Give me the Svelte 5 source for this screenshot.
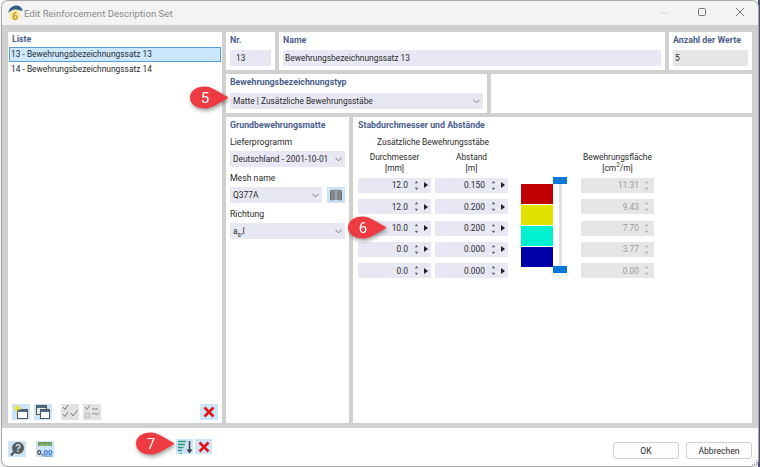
<script>
    let rows = [
        {dia: "12.0", gap: "0.150", area: "11.31"},
        {dia: "12.0", gap: "0.200", area: "9.43"},
        {dia: "10.0", gap: "0.200", area: "7.70"},
        {dia: "0.0", gap: "0.000", area: "3.77"},
        {dia: "0.0", gap: "0.000", area: "0.00"}
    ];

    let legend = ["#c00000", "#e2e200", "#00f0d0", "#0000a8"];

    // rounded bubble with a point on its right side
    let bubble = "M16 1.500 C22 1.500 28 6 38.500 11.800 C39.200 12.300 39.200 12.900 38.500 13.400 C28 19 22 23.500 16 23.500 C7 23.500 1 19 1 12.500 C1 6 7 1.500 16 1.500 Z";
</script>

<div class="window">
    <header class="titlebar">
        <svg class="app-icon" width="16" height="16" viewBox="0 0 16 16">
            <path d="M1.500 8 C1.500 3 6 0.500 9.500 0.500 C13 0.500 15.500 3 15.500 6 L9 4.500 C6 4.500 3 6 1.500 8Z" fill="#2f5f86"/>
            <circle cx="8" cy="10" r="5.500" fill="#f7e7a8"/>
            <text x="8" y="14.500" class="six">6</text>
        </svg>
        <span class="title">Edit Reinforcement Description Set</span>
        <div class="win-btns">
            <svg width="12" height="12" viewBox="0 0 12 12"><path d="M1 6H10" stroke="#dcdcdc" fill="none"/></svg>
            <svg width="12" height="12" viewBox="0 0 12 12"><rect x="1.500" y="1.500" width="7" height="7" rx="1" stroke="#777" fill="none"/></svg>
            <svg width="12" height="12" viewBox="0 0 12 12"><path d="M1 1L9 9M9 1L1 9" stroke="#777" fill="none"/></svg>
        </div>
    </header>

    <main class="content">
        <section class="panel list-panel">
            <h3>Liste</h3>
            <ul>
                <li class="selected">13 - Bewehrungsbezeichnungssatz 13</li>
                <li>14 - Bewehrungsbezeichnungssatz 14</li>
            </ul>
            <div class="list-tools">
                <button class="tool">
                    <svg width="16" height="16" viewBox="0 0 16 16">
                        <rect x="4.500" y="5.500" width="10" height="9" fill="#fff" stroke="#555"/>
                        <rect x="5" y="6" width="9" height="2" fill="#4d6b8a"/>
                        <path d="M4 0.500L5 3L7.500 2L6 4.200L8 6L5 5.500L4 8L3 5.500L0.500 6L2 4L0.500 2L3 3Z" fill="#e8e020"/>
                    </svg>
                </button>
                <button class="tool">
                    <svg width="16" height="16" viewBox="0 0 16 16">
                        <rect x="1.500" y="1.500" width="10" height="9" fill="#dfe6ee" stroke="#555"/>
                        <rect x="2" y="2" width="9" height="2" fill="#4d6b8a"/>
                        <rect x="5.500" y="5.500" width="9" height="9" fill="#fff" stroke="#555"/>
                        <rect x="6" y="6" width="8" height="2" fill="#4d6b8a"/>
                    </svg>
                </button>
                <button class="tool off first-off">
                    <svg width="16" height="16" viewBox="0 0 16 16" fill="none" stroke="#777">
                        <path d="M1 3L3 5.500L6 1M1 10L3 12.500L6 8M9 9L11 12L15.500 6"/>
                    </svg>
                </button>
                <button class="tool off">
                    <svg width="16" height="16" viewBox="0 0 16 16" fill="none" stroke="#888">
                        <path d="M1 3L3 5.500L6 1"/>
                        <rect x="1.500" y="9.500" width="4" height="4" stroke="#bbb"/>
                        <path d="M8 5H14M8 10C10 8 12 12 15 9"/>
                    </svg>
                </button>
                <button class="tool delete">
                    <svg width="12" height="12" viewBox="0 0 12 12"><path d="M1.500 1.500L10.500 10.500M10.500 1.500L1.500 10.500" stroke="#e0131a" stroke-width="2.600"/></svg>
                </button>
            </div>
        </section>

        <div class="right">
            <div class="top-row">
                <section class="panel nr">
                    <h3>Nr.</h3>
                    <div class="field">13</div>
                </section>
                <section class="panel name">
                    <h3>Name</h3>
                    <div class="field">Bewehrungsbezeichnungssatz 13</div>
                </section>
                <section class="panel count">
                    <h3>Anzahl der Werte</h3>
                    <div class="field grey">5</div>
                </section>
            </div>

            <div class="type-row">
                <section class="panel type">
                    <h3>Bewehrungsbezeichnungstyp</h3>
                    <div class="field select type-select">Matte | Zusätzliche Bewehrungsstäbe
                        <svg class="chev" width="7" height="5" viewBox="0 0 8 5"><path d="M0.500 0.500L4 4L7.500 0.500" stroke="#666" fill="none"/></svg>
                    </div>
                </section>
                <section class="panel empty"></section>
            </div>

            <div class="main-row">
                <section class="panel mesh">
                    <h3>Grundbewehrungsmatte</h3>
                    <label>Lieferprogramm</label>
                    <div class="field select">Deutschland - 2001-10-01
                        <svg class="chev" width="7" height="5" viewBox="0 0 8 5"><path d="M0.500 0.500L4 4L7.500 0.500" stroke="#666" fill="none"/></svg>
                    </div>
                    <label>Mesh name</label>
                    <div class="mesh-line">
                        <div class="field select">Q377A
                            <svg class="chev" width="7" height="5" viewBox="0 0 8 5"><path d="M0.500 0.500L4 4L7.500 0.500" stroke="#666" fill="none"/></svg>
                        </div>
                        <button class="book">
                            <svg width="14" height="12" viewBox="0 0 14 12">
                                <path d="M1 1.500L6.500 0.500V11L1 11.500Z M7.500 0.500L13 1.500V11.500L7.500 11Z" fill="#6d6d6d"/>
                                <path d="M3 1.500V11M5 1V11M9 1V11M11 1.500V11" stroke="#c8d4dc" stroke-width="0.500"/>
                            </svg>
                        </button>
                    </div>
                    <label>Richtung</label>
                    <div class="field select">a<sub>s</sub>,I
                        <svg class="chev" width="7" height="5" viewBox="0 0 8 5"><path d="M0.500 0.500L4 4L7.500 0.500" stroke="#666" fill="none"/></svg>
                    </div>
                </section>

                <section class="panel bars">
                    <h3>Stabdurchmesser und Abstände</h3>
                    <div class="bars-grid">
                        <div class="group-head">Zusätzliche Bewehrungsstäbe</div>
                        <div class="head h-dia">Durchmesser<br>[mm]</div>
                        <div class="head h-gap">Abstand<br>[m]</div>
                        <div class="head h-area">Bewehrungsfläche<br>[cm<sup>2</sup>/m]</div>

                        <div class="legend">
                            <div class="swatches">
                                {#each legend as color}
                                    <div class="swatch" style="background: {color}"></div>
                                {/each}
                            </div>
                            <div class="slider">
                                <div class="handle"></div>
                                <div class="track"></div>
                                <div class="handle"></div>
                            </div>
                        </div>

                        {#each rows as row, i}
                            <div class="spin" style="grid-area: {i + 3} / 1">
                                <span class="val">{row.dia}</span>
                                <svg class="arrows" width="5" height="11" viewBox="0 0 5 11"><path d="M2.500 1L4.200 3.200H0.800ZM2.500 10L0.800 7.800H4.200Z" fill="#555"/></svg>
                                <svg class="play" width="4" height="6" viewBox="0 0 4 6"><path d="M0 0L4 3L0 6Z" fill="#222"/></svg>
                            </div>
                            <div class="spin" style="grid-area: {i + 3} / 2">
                                <span class="val">{row.gap}</span>
                                <svg class="arrows" width="5" height="11" viewBox="0 0 5 11"><path d="M2.500 1L4.200 3.200H0.800ZM2.500 10L0.800 7.800H4.200Z" fill="#555"/></svg>
                                <svg class="play" width="4" height="6" viewBox="0 0 4 6"><path d="M0 0L4 3L0 6Z" fill="#222"/></svg>
                            </div>
                            <div class="spin grey" style="grid-area: {i + 3} / 4">
                                <span class="val">{row.area}</span>
                                <svg class="arrows area-arrows" width="5" height="11" viewBox="0 0 5 11"><path d="M2.500 1L4.200 3.200H0.800ZM2.500 10L0.800 7.800H4.200Z" fill="#aaa"/></svg>
                            </div>
                        {/each}
                    </div>
                </section>
            </div>
        </div>
    </main>

    <footer class="footer">
        <div class="foot-left">
            <button class="tool">
                <svg width="16" height="16" viewBox="0 0 16 16">
                    <circle cx="9" cy="7" r="6" fill="#5a5a5a"/>
                    <path d="M5 11L2 14.500" stroke="#5a5a5a" stroke-width="2.500"/>
                    <text x="9" y="10.500" class="q">?</text>
                </svg>
            </button>
            <button class="tool units">
                <svg width="16" height="16" viewBox="0 0 16 16">
                    <rect x="1" y="1" width="14" height="4" fill="#6f9e5a"/>
                    <path d="M3 3V5M5.500 3V5M8 3V5M10.500 3V5M13 3V5" stroke="#cfe4c4" stroke-width="0.600"/>
                    <text x="0" y="13.500" class="nums">0,</text>
                    <text x="6.500" y="13.500" class="nums blue">00</text>
                    <path d="M6.500 15H15.500" stroke="#2a6fd0" stroke-width="0.800"/>
                </svg>
            </button>
        </div>
        <div class="foot-mid">
            <button class="tool">
                <svg width="16" height="16" viewBox="0 0 16 16">
                    <path d="M1 2.500H9M1 5.500H8M1 8.500H6.500M1 11.500H5M3 14.500H4.500" stroke="#2c9a72" stroke-width="1.600"/>
                    <path d="M12.500 2V13" stroke="#444" stroke-width="1.500"/>
                    <path d="M9.500 10.500L12.500 14.500L15.500 10.500Z" fill="#444"/>
                </svg>
            </button>
            <button class="tool delete">
                <svg width="12" height="12" viewBox="0 0 12 12"><path d="M1.500 1.500L10.500 10.500M10.500 1.500L1.500 10.500" stroke="#e0131a" stroke-width="2.600"/></svg>
            </button>
        </div>
        <div class="foot-btns">
            <button class="btn">OK</button>
            <button class="btn">Abbrechen</button>
        </div>
        <svg class="grip" width="7" height="7" viewBox="0 0 7 7"><path d="M5 1h1v1H5zM3 3h1v1H3zM5 3h1v1H5zM1 5h1v1H1zM3 5h1v1H3zM5 5h1v1H5z" fill="#9a9a9a"/></svg>
    </footer>

    <svg class="callout c5" width="40" height="25" viewBox="0 0 40 25"><path d={bubble} fill="#ee3b42"/><text x="16" y="18">5</text></svg>
    <svg class="callout c6" width="40" height="25" viewBox="0 0 40 25"><path d={bubble} fill="#ee3b42"/><text x="16" y="18">6</text></svg>
    <svg class="callout c7" width="40" height="25" viewBox="0 0 40 25"><path d={bubble} fill="#ee3b42"/><text x="16" y="18">7</text></svg>
</div>

<style>
    :global(body) {
        background: linear-gradient(to right, #f4f4f4 758px, #4d4d7a 758px);
        font-family: Roboto, "Noto Sans", sans-serif;
        font-size: 8.400px;
        color: #2a2a2a;
        height: 467px;
    }

    .window {
        position: relative;
        box-sizing: border-box;
        margin: 1px 2px 0 2px;
        width: 756px;
        height: 465px;
        background-color: #fff;
        border-radius: 6px;
        display: flex;
        flex-direction: column;
        overflow: hidden;
        box-shadow: 0 0 0 1px #a8a8a8;
    }

    .titlebar {
        height: 24px;
        background-color: #f3f3f3;
        display: flex;
        align-items: center;
        padding-left: 5px;
        flex: none;
    }

    .app-icon {margin-right: 1px;}
    .six {font-size: 10px; font-weight: 700; fill: #c8a020; text-anchor: middle;}

    .title {
        font-size: 9.600px;
        color: #8a8a8a;
    }

    .win-btns {
        margin-left: auto;
        display: flex;
        gap: 26px;
        padding-right: 11px;
    }

    .content {
        flex: none;
        height: 403px;
        box-sizing: border-box;
        background-color: #d0d0d0;
        padding: 7px 6px 5px 6px;
        display: flex;
        gap: 4px;
    }

    .panel {
        background-color: #fff;
        box-sizing: border-box;
        padding: 0 4px;
    }

    h3 {
        margin: 0;
        font-size: 8.800px;
        font-weight: 700;
        line-height: 14px;
        color: #4a5f8c;
    }

    .list-panel {
        width: 214px;
        display: flex;
        flex-direction: column;
    }

    .list-panel ul {
        list-style: none;
        margin: 1px -3px 0 -3px;
        padding: 0;
        flex: 1;
    }

    .list-panel li {
        height: 15px;
        line-height: 13px;
        padding: 0 1px;
        box-sizing: border-box;
        border: 1px solid transparent;
    }

    .list-panel .selected {
        background-color: #cce8ff;
        border-color: #5a9bd4;
    }

    .list-tools {
        display: flex;
        gap: 4px;
        padding: 0 0 3px 0;
    }

    .tool {
        width: 18px;
        height: 16px;
        padding: 0;
        border: none;
        background-color: #cce4f7;
        display: flex;
        align-items: center;
        justify-content: center;
    }

    .tool.off {background-color: #e2e2e2;}
    .first-off {margin-left: 5px;}
    .tool.delete {margin-left: auto;}

    .right {
        width: 526px;
        display: flex;
        flex-direction: column;
        gap: 4px;
    }

    .top-row {
        height: 38px;
        display: flex;
        gap: 4px;
    }

    .top-row .panel {padding-top: 1px;}
    .nr {width: 49px;}
    .name {width: 386px;}
    .count {width: 83px;}

    .field {
        height: 16px;
        line-height: 16px;
        padding: 0 2px;
        margin-top: 3px;
        background-color: #e8e8f4;
        position: relative;
        box-sizing: border-box;
    }

    .nr .field {padding-left: 6px;}
    .field.grey {background-color: #e6e6e6;}

    .type-row {
        height: 39px;
        display: flex;
        gap: 4px;
    }

    .type {width: 261px; padding-top: 1px;}
    .empty {width: 261px;}
    .type-select {margin-top: 4px; padding-left: 3px;}

    .select {padding-left: 3px;}

    .chev {
        position: absolute;
        right: 3px;
        top: 6px;
    }

    .main-row {
        flex: 1;
        display: flex;
        gap: 4px;
    }

    .mesh {width: 123px; padding-top: 1px;}

    label {
        display: block;
        font-size: 8.700px;
        line-height: 13px;
        margin-top: 5px;
    }

    .mesh h3 + label {margin-top: 4px;}
    .mesh label + .field {margin-top: 2px;}
    .mesh label + .mesh-line {margin-top: 2px;}

    .mesh-line {
        display: flex;
        gap: 5px;
    }

    .mesh-line .field {
        margin-top: 0;
        flex: 1;
    }

    .book {
        width: 18px;
        height: 16px;
        padding: 0;
        border: none;
        background-color: #cce4f7;
        display: flex;
        align-items: center;
        justify-content: center;
    }

    sub {font-size: 6.500px; line-height: 0;}

    .bars {width: 399px; padding: 1px 5px 0 5px;}

    .bars-grid {
        display: grid;
        grid-template-columns: 73px 73px 65px 73px;
        column-gap: 4px;
        grid-template-rows: 14px 16.400px repeat(5, 15px);
        row-gap: 6.300px;
        margin-top: 3px;
    }

    .group-head {
        grid-area: 1 / 1 / 2 / 3;
        text-align: center;
        line-height: 14px;
    }

    .head {
        text-align: center;
        line-height: 11px;
        margin-top: -3px;
    }

    .h-dia {grid-area: 2 / 1;}
    .h-gap {grid-area: 2 / 2;}
    .h-area {grid-area: 2 / 4;}

    sup {font-size: 6.500px; line-height: 0;}

    .spin {
        background-color: #e8e8f4;
        display: flex;
        align-items: center;
        height: 15px;
        padding-right: 3px;
    }

    .spin .val {
        flex: 1;
        text-align: right;
    }

    .arrows {margin: 0 5px 0 6px;}
    .spin.grey {background-color: #e6e6e6; color: #999;}
    .area-arrows {margin: 0 2px 0 5px;}

    .legend {
        grid-area: 3 / 3 / 8 / 4;
        display: flex;
        margin-left: 9px;
    }

    .swatches {
        display: flex;
        flex-direction: column;
        gap: 1px;
        padding-top: 6px;
    }

    .swatch {
        width: 32px;
        height: 20px;
    }

    .slider {
        width: 14px;
        display: flex;
        flex-direction: column;
        align-items: center;
        margin-top: -1px;
    }

    .handle {
        width: 14px;
        height: 7px;
        background-color: #0a78d8;
        flex: none;
    }

    .track {
        width: 3px;
        height: 82px;
        background-color: #e2e2e2;
    }

    .footer {
        flex: 1;
        display: flex;
        align-items: flex-start;
        position: relative;
    }

    .foot-left {
        display: flex;
        gap: 10px;
        padding: 13px 0 0 6px;
    }

    .foot-mid {
        display: flex;
        gap: 2px;
        padding: 11px 0 0 122px;
    }

    .foot-mid .tool {width: 17px; height: 15px;}
    .foot-mid .delete {margin-left: 0;}

    .foot-btns {
        margin-left: auto;
        display: flex;
        gap: 7px;
        padding: 14px 6px 0 0;
    }

    .btn {
        width: 66px;
        height: 17px;
        padding: 0;
        font-family: inherit;
        font-size: 8.600px;
        color: #2a2a2a;
        background-color: #fdfdfd;
        border: 1px solid #d0d0d0;
        border-radius: 3px;
    }

    .grip {
        position: absolute;
        right: 0;
        bottom: 0;
    }

    .q {font-size: 10px; font-weight: 700; fill: #cce4f7; text-anchor: middle;}
    .nums {font-size: 8px; font-weight: 700; fill: #333;}
    .nums.blue {fill: #2a6fd0;}

    .callout {
        position: absolute;
        overflow: visible;
        filter: drop-shadow(1px 2px 2px rgba(0, 0, 0, 0.4));
    }

    .callout text {
        font-size: 15px;
        fill: #fff;
        text-anchor: middle;
    }

    .c5 {left: 187px; top: 84px;}
    .c6 {left: 345px; top: 214px;}
    .c7 {left: 133px; top: 430px;}
</style>
